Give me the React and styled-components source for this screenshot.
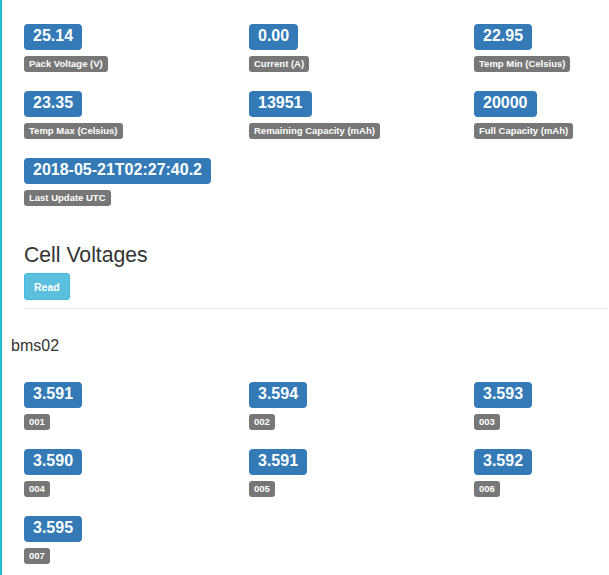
import React from 'react'
import styled, { createGlobalStyle } from 'styled-components'

const GlobalStyle = createGlobalStyle`
  html, body {
    margin: 0;
    padding: 0;
    background: #fff;
    overflow: hidden;
  }
  body {
    font-family: "Liberation Sans", Arial, sans-serif;
    color: #333;
  }
`;

const Page = styled.div`
  min-height: 100vh;
  border-left: 2px solid #1ebfcf;
  box-sizing: border-box;
  padding: 24px 0 0 9px;
`;

const Section = styled.div`
  padding-left: 13px;
`;

const Grid = styled.div`
  display: grid;
  grid-template-columns: 225px 225px minmax(0, 1fr);
  row-gap: 19px;
`;

const Stat = styled.div`
  display: flex;
  flex-direction: column;
  align-items: flex-start;
  gap: 6px;
`;

const Value = styled.span`
  display: inline-block;
  background: #337ab7;
  color: #fff;
  font-weight: 700;
  font-size: 16px;
  line-height: 1;
  padding: 4px 9px 6px;
  border-radius: 4px;
  white-space: nowrap;
`;

const Label = styled.span`
  display: inline-block;
  background: #777;
  color: #fff;
  font-weight: 700;
  font-size: 9.5px;
  line-height: 1;
  padding: 3px 5px 3.5px;
  border-radius: 3px;
  white-space: nowrap;
`;

const Heading = styled.h3`
  margin: 37px 0 7px;
  font-size: 21.2px;
  font-weight: 400;
  line-height: 1.1;
  color: #333;
`;

const Button = styled.button`
  font-family: inherit;
  font-size: 10.5px;
  font-weight: 700;
  line-height: 1;
  height: 27px;
  padding: 0 9px;
  color: #fff;
  background: #5bc0de;
  border: 1px solid #46b8da;
  border-radius: 3px;
`;

const Rule = styled.hr`
  margin: 8px 1px 0 0;
  border: 0;
  border-top: 1px solid #eee;
`;

const Device = styled.h4`
  margin: 28px 0 27px;
  font-size: 16px;
  font-weight: 400;
  line-height: 1.1;
  color: #333;
`;

const pack = [
  ['25.14', 'Pack Voltage (V)'],
  ['0.00', 'Current (A)'],
  ['22.95', 'Temp Min (Celsius)'],
  ['23.35', 'Temp Max (Celsius)'],
  ['13951', 'Remaining Capacity (mAh)'],
  ['20000', 'Full Capacity (mAh)'],
  ['2018-05-21T02:27:40.2', 'Last Update UTC'],
];

const cells = [
  ['3.591', '001'],
  ['3.594', '002'],
  ['3.593', '003'],
  ['3.590', '004'],
  ['3.591', '005'],
  ['3.592', '006'],
  ['3.595', '007'],
];

const StatGrid = ({ items }) => (
  <Grid>
    {items.map(([value, label]) => (
      <Stat key={label}>
        <Value>{value}</Value>
        <Label>{label}</Label>
      </Stat>
    ))}
  </Grid>
);

const App = () => {
  return (
    <Page>
      <GlobalStyle />
      <Section>
        <StatGrid items={pack} />
        <Heading>Cell Voltages</Heading>
        <Button>Read</Button>
        <Rule />
      </Section>
      <Device>bms02</Device>
      <Section>
        <StatGrid items={cells} />
      </Section>
    </Page>
  )
}

export default App
